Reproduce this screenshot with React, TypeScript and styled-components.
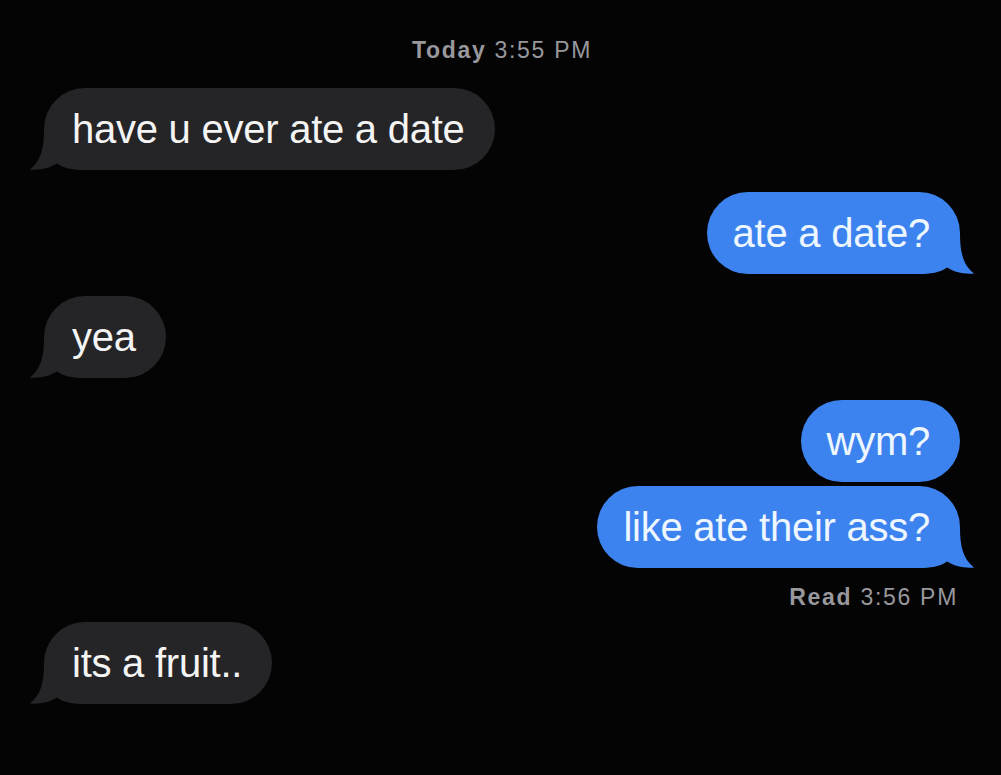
import React from 'react';
import styled, { createGlobalStyle } from 'styled-components';

const GlobalStyle = createGlobalStyle`
  html, body {
    margin: 0;
    padding: 0;
    background: #040405;
  }
  body {
    font-family: "Liberation Sans", Arial, sans-serif;
  }
`;

const Screen = styled.div`
  width: 1001px;
  height: 775px;
  box-sizing: border-box;
  padding: 36px 41px 0 44px;
  background: #040405;
  display: flex;
  flex-direction: column;
  overflow: hidden;
`;

const Stamp = styled.div<{ $align: 'center' | 'right' }>`
  font-size: 23px;
  line-height: 28px;
  letter-spacing: 1.7px;
  color: #98989d;
  text-align: ${p => p.$align};
  padding-right: ${p => (p.$align === 'right' ? '2px' : '0')};

  b {
    font-weight: 700;
  }
`;

const Row = styled.div<{ $side: 'in' | 'out'; $gap: number }>`
  display: flex;
  justify-content: ${p => (p.$side === 'in' ? 'flex-start' : 'flex-end')};
  margin-top: ${p => p.$gap}px;
`;

const Bubble = styled.div<{ $side: 'in' | 'out' }>`
  position: relative;
  padding: 17px 30px 17px ${p => (p.$side === 'in' ? '28px' : '26px')};
  border-radius: 41px;
  font-size: 40px;
  line-height: 48px;
  letter-spacing: -0.25px;
  white-space: nowrap;
  background: ${p => (p.$side === 'in' ? '#252528' : '#3c83ef')};
  color: ${p => (p.$side === 'in' ? '#f4f4f4' : '#eef6ff')};
`;

const Label = styled.span`
  position: relative;
`;

const Tail = styled.svg<{ $side: 'in' | 'out' }>`
  position: absolute;
  bottom: 0;
  width: 56px;
  height: 40px;
  ${p => (p.$side === 'in' ? 'left: -14px;' : 'right: -14px; transform: scaleX(-1);')}

  path {
    fill: ${p => (p.$side === 'in' ? '#252528' : '#3c83ef')};
  }
`;

type Side = 'in' | 'out';

const Message = ({ side, text, tail = true, gap }: { side: Side; text: string; tail?: boolean; gap: number }) => (
  <Row $side={side} $gap={gap}>
    <Bubble $side={side}>
      {tail && (
        <Tail $side={side} viewBox="0 0 56 40">
          <path d="M14 0 C14 18 11 31 0 39.5 C10 40.5 20 38 27 33.5 C34 38.5 43 40 56 40 L56 0 Z" />
        </Tail>
      )}
      <Label>{text}</Label>
    </Bubble>
  </Row>
);

export default function App() {
  return (
    <Screen>
      <GlobalStyle />
      <Stamp $align="center">
        <b>Today</b> 3:55 PM
      </Stamp>
      <Message side="in" text="have u ever ate a date" gap={24} />
      <Message side="out" text="ate a date?" gap={22} />
      <Message side="in" text="yea" gap={22} />
      <Message side="out" text="wym?" tail={false} gap={22} />
      <Message side="out" text="like ate their ass?" gap={4} />
      <Stamp $align="right" style={{ marginTop: 15 }}>
        <b>Read</b> 3:56 PM
      </Stamp>
      <Message side="in" text="its a fruit.." gap={11} />
    </Screen>
  );
}
